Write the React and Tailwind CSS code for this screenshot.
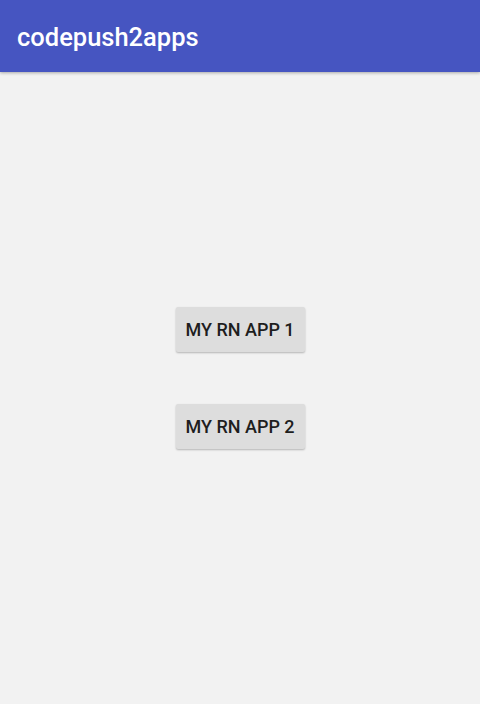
export default function App() {
  return (
    <div className="w-[480px] h-[704px] bg-[#f2f2f2] flex flex-col" style={{ fontFamily: "Roboto, 'Noto Sans', sans-serif" }}>
      <div className="h-[72px] bg-[#4655c1] flex items-center pl-[17px] shadow-[0_1px_3px_rgba(0,0,0,0.3)] shrink-0">
        <span className="text-white text-[25.5px] font-medium leading-none pt-[4px]">codepush2apps</span>
      </div>
      <div className="flex flex-col items-center pt-[235px] gap-[52px]">
        <button className="w-[129px] h-[45px] bg-[#dddddd] rounded-[2px] shadow-[0_1px_2px_rgba(0,0,0,0.25)] text-[#1e1e1e] text-[18px] font-medium flex items-center justify-center">MY RN APP 1</button>
        <button className="w-[129px] h-[45px] bg-[#dddddd] rounded-[2px] shadow-[0_1px_2px_rgba(0,0,0,0.25)] text-[#1e1e1e] text-[18px] font-medium flex items-center justify-center">MY RN APP 2</button>
      </div>
    </div>
  );
}
